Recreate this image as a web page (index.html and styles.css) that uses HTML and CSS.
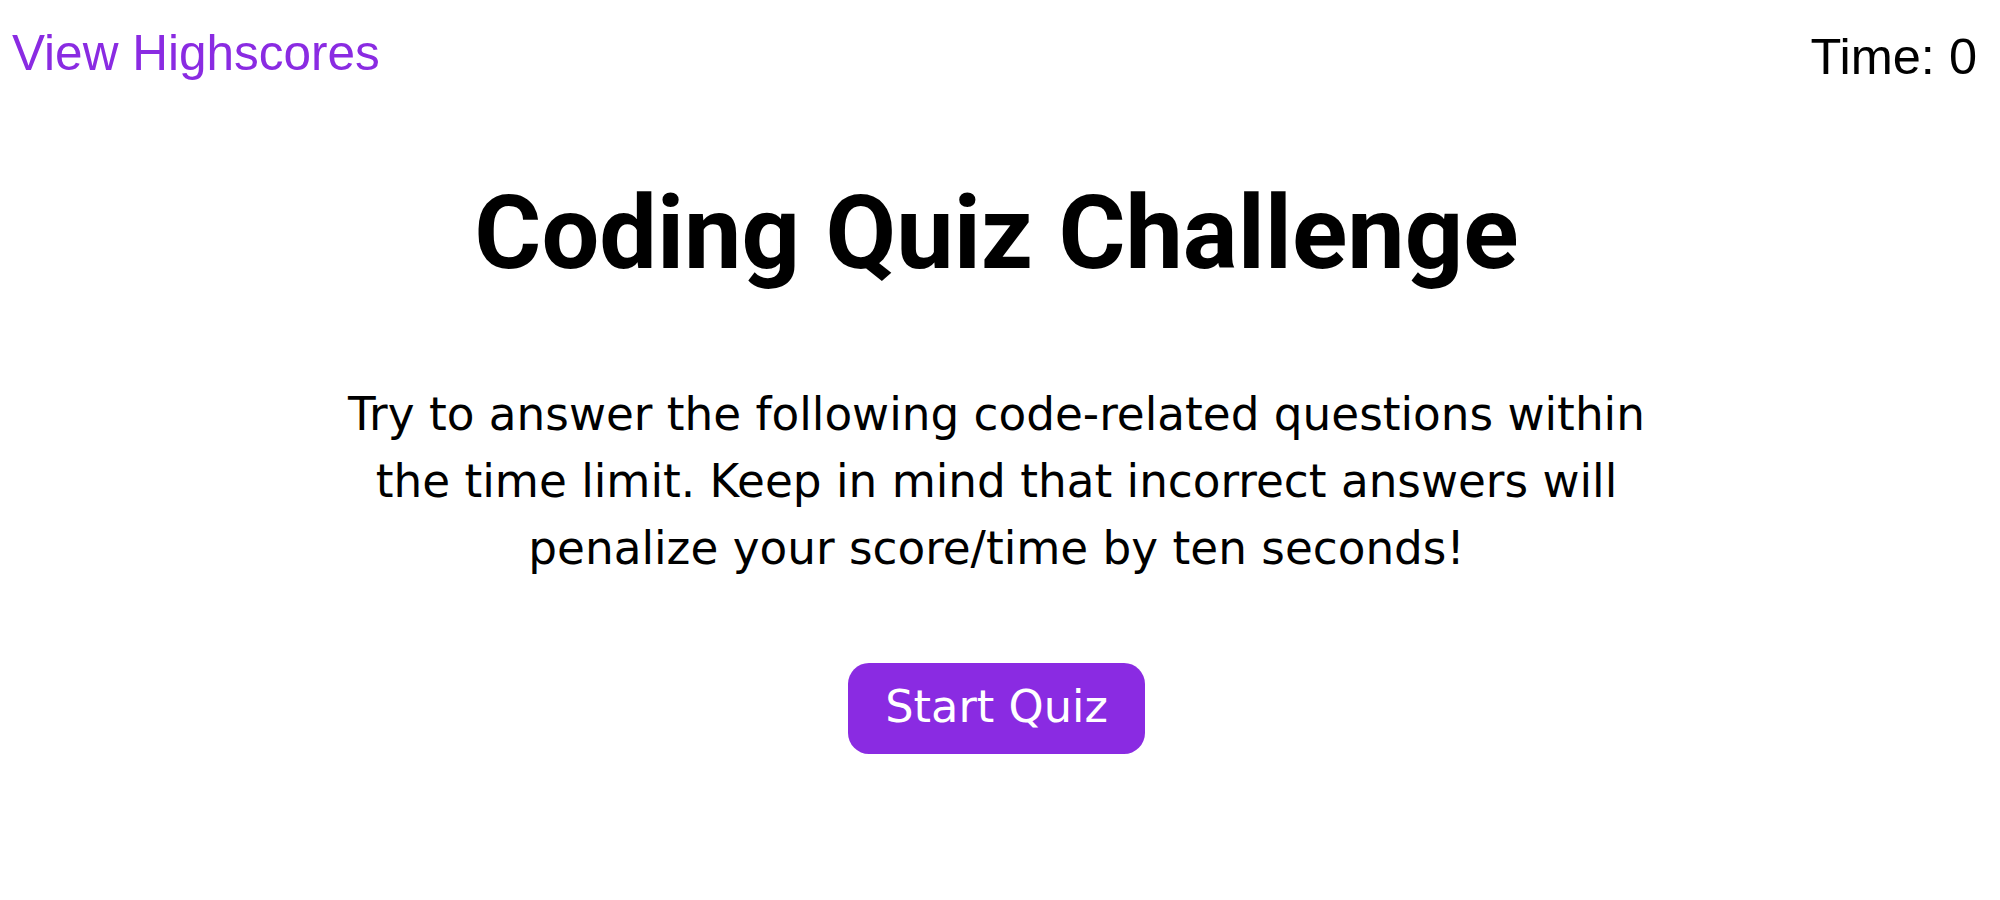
FILE: index.html
```html
<!DOCTYPE html>
<html lang="en">
<head>
<meta charset="utf-8">
<title>Coding Quiz Challenge</title>
<link rel="stylesheet" href="styles.css">
</head>
<body>
  <header class="topbar">
    <a class="highscores" href="#">View Highscores</a>
    <div class="timer">Time: <span class="time-value">0</span></div>
  </header>
  <main class="intro">
    <h1 class="title">Coding Quiz Challenge</h1>
    <p class="lead">Try to answer the following code-related questions within the time limit. Keep in mind that incorrect answers will penalize your score/time by ten seconds!</p>
    <button class="start-btn" type="button">Start Quiz</button>
  </main>
</body>
</html>
```
FILE: styles.css
```css
html, body {
  margin: 0;
  padding: 0;
  background: #ffffff;
}

body {
  font-family: "DejaVu Sans", sans-serif;
  color: #000000;
}

.topbar {
  display: flex;
  justify-content: space-between;
  align-items: flex-start;
  padding: 23px 23px 0 12px;
}

.highscores {
  font-family: "Liberation Sans", Arial, sans-serif;
  font-size: 49.5px;
  line-height: 60px;
  color: #8a2be2;
  text-decoration: none;
}

.timer {
  font-family: "Liberation Sans", Arial, sans-serif;
  font-size: 50.5px;
  line-height: 60px;
  margin-top: 4px;
}

.intro {
  display: flex;
  flex-direction: column;
  align-items: center;
  margin-right: 7px;
}

.title {
  font-family: Roboto, "Liberation Sans", sans-serif;
  font-weight: 700;
  font-size: 102.5px;
  line-height: 120px;
  margin: 86px 0 0;
}

.lead {
  font-size: 45.3px;
  line-height: 67px;
  text-align: center;
  max-width: 1340px;
  margin: 88px 0 0;
}

.start-btn {
  font-family: "DejaVu Sans", sans-serif;
  font-size: 44.7px;
  line-height: 55px;
  color: #ffffff;
  background: #8a2be2;
  border: none;
  border-radius: 21px;
  padding: 17px 37px 19px;
  margin-top: 81px;
  cursor: pointer;
}
```
